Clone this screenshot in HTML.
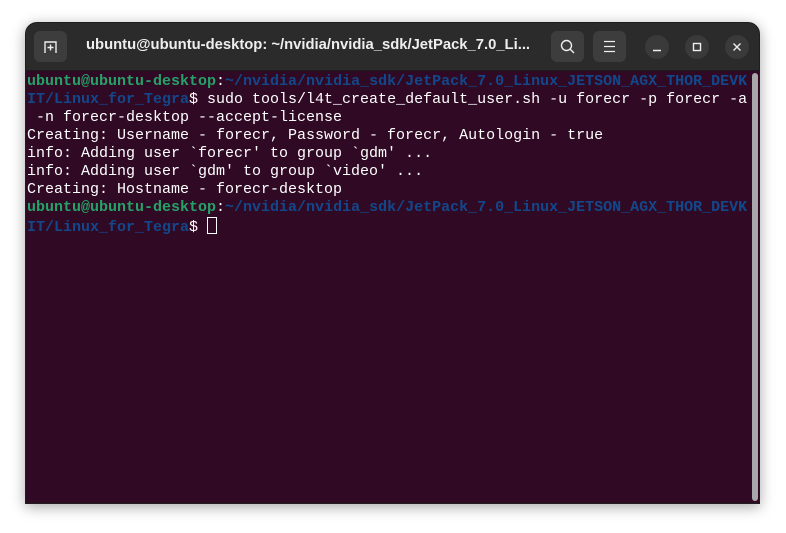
<!DOCTYPE html>
<html><head><style>
body{margin:0;width:786px;height:533px;background:#fff;position:relative;overflow:hidden;font-family:"Liberation Sans",sans-serif}
.win{position:absolute;left:25px;top:22px;width:735px;height:482px;background:#300a24;border-radius:12px 12px 0 0;overflow:hidden;box-shadow:0 3px 14px rgba(0,0,0,.35);border:1px solid #1e1e1e;box-sizing:border-box}
.hd{position:absolute;left:0;top:0;width:100%;height:47px;background:#2b2b2b;border-bottom:1px solid #1b1b1b}
.btn{position:absolute;top:8px;width:33px;height:31px;background:#3d3d3d;border-radius:6px}
.circ{position:absolute;top:12px;width:24px;height:24px;border-radius:50%;background:#3a3a3a}
.title{position:absolute;left:60px;top:14px;color:#eee;font-weight:bold;font-size:14.8px;white-space:nowrap}
.term{position:absolute;left:1px;top:50px;font-family:"Liberation Mono",monospace;font-size:15px;line-height:18px;color:#fff;white-space:pre}
.g{color:#26a269;font-weight:bold}.b{color:#12488b;font-weight:bold}
.cur{display:inline-block;width:8px;height:15px;border:1px solid #fff;vertical-align:-3px}
.sb{position:absolute;left:726px;top:50px;width:6px;height:428px;background:#a9a7a9;border-radius:3px}
</style></head><body>
<div class="win">
<div class="hd">
<div class="btn" style="left:8px"><svg width="33" height="31"><path d="M11 22V11h11v11M16.5 13.5v6M13.5 16.5h6" stroke="#eee" stroke-width="1.4" fill="none"/></svg></div>
<div class="title">ubuntu@ubuntu-desktop: ~/nvidia/nvidia_sdk/JetPack_7.0_Li...</div>
<div class="btn" style="left:525px"><svg width="33" height="31"><circle cx="15.5" cy="14.5" r="5" stroke="#eee" stroke-width="1.4" fill="none"/><path d="M19 18l4 4" stroke="#eee" stroke-width="1.4"/></svg></div>
<div class="btn" style="left:567px"><svg width="33" height="31"><path d="M11 10.5h11M11 15.5h11M11 20.5h11" stroke="#eee" stroke-width="1.3"/></svg></div>
<div class="circ" style="left:619px"><svg width="24" height="24"><path d="M8 15.5h8" stroke="#eee" stroke-width="1.4"/></svg></div>
<div class="circ" style="left:659px"><svg width="24" height="24"><rect x="8.5" y="8.5" width="7" height="7" stroke="#eee" stroke-width="1.4" fill="none"/></svg></div>
<div class="circ" style="left:699px"><svg width="24" height="24"><path d="M8.5 8.5l7 7M15.5 8.5l-7 7" stroke="#eee" stroke-width="1.4"/></svg></div>
</div>
<div class="term"><span class="g">ubuntu@ubuntu-desktop</span>:<span class="b">~/nvidia/nvidia_sdk/JetPack_7.0_Linux_JETSON_AGX_THOR_DEVK</span>
<span class="b">IT/Linux_for_Tegra</span>$ sudo tools/l4t_create_default_user.sh -u forecr -p forecr -a
 -n forecr-desktop --accept-license
Creating: Username - forecr, Password - forecr, Autologin - true
info: Adding user `forecr' to group `gdm' ...
info: Adding user `gdm' to group `video' ...
Creating: Hostname - forecr-desktop
<span class="g">ubuntu@ubuntu-desktop</span>:<span class="b">~/nvidia/nvidia_sdk/JetPack_7.0_Linux_JETSON_AGX_THOR_DEVK</span>
<span class="b">IT/Linux_for_Tegra</span>$ <span class="cur"></span></div>
<div class="sb"></div>
</div>
</body></html>
